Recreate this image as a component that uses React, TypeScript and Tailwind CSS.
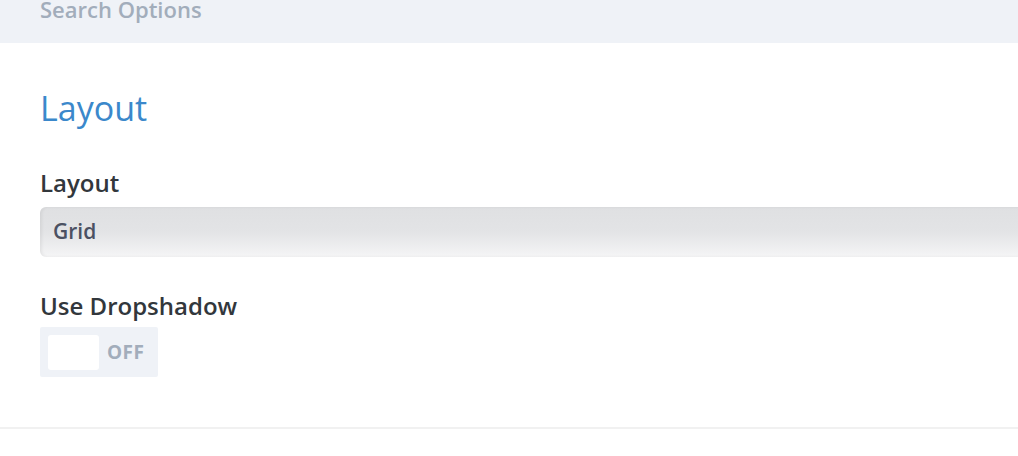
import React from "react";

export default function App() {
  return (
    <div
      className="w-[1018px] h-[456px] bg-white overflow-hidden"
      style={{ fontFamily: '"Open Sans", sans-serif' }}
    >
      <div className="h-[43px] bg-[#eff2f7] pl-[40px]">
        <div className="text-[22px] leading-[19px] font-semibold text-[#a2adbb]">Search Options</div>
      </div>
      <div className="pl-[40px] pt-[43px]">
        <h2 className="text-[34px] leading-[44px] font-normal text-[#3b88cb]">Layout</h2>
        <div className="mt-[39px] text-[24px] leading-[28px] font-semibold text-[#32373c]">Layout</div>
        <div className="mt-[10px] h-[50px] rounded-l-[6px] bg-gradient-to-b from-[#dfe0e2] via-[#e3e4e6] to-[#f5f5f6] flex items-center pl-[13px] shadow-[inset_2px_0_3px_rgba(0,0,0,0.06)]">
          <span className="text-[21px] font-semibold text-[#4b5162]">Grid</span>
        </div>
        <div className="mt-[35px] text-[24px] leading-[28px] font-semibold text-[#32373c]">Use Dropshadow</div>
        <div className="mt-[7px] w-[118px] h-[50px] bg-[#eff2f7] rounded-[2px] flex items-center pl-[8px]">
          <div className="w-[51px] h-[35px] bg-white rounded-[3px]" />
          <span className="ml-[8px] text-[19px] font-bold text-[#a2adbb] tracking-[0.5px]">OFF</span>
        </div>
      </div>
      <div className="mt-[50px] h-[2px] bg-[#f1f1f1]" />
    </div>
  );
}
